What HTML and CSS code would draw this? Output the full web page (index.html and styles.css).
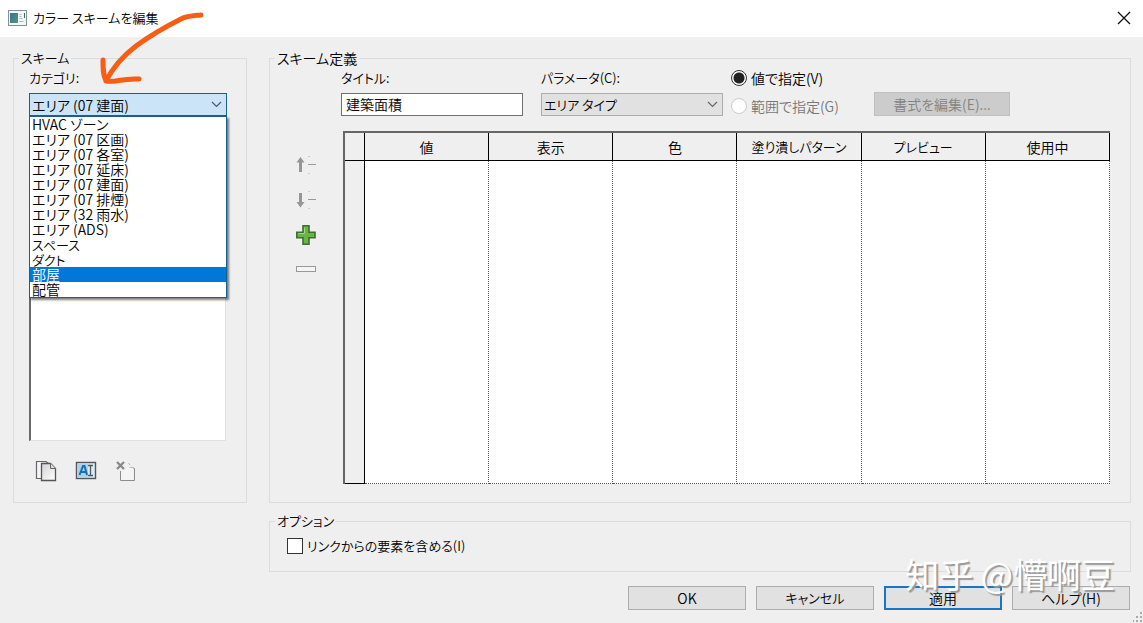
FILE: index.html
```html
<!DOCTYPE html>
<html lang="ja">
<head>
<meta charset="utf-8">
<meta name="viewport" content="width=device-width, initial-scale=1">
<title>カラー スキームを編集</title>
<link rel="stylesheet" href="styles.css">
</head>
<body>
<header class="titlebar">
  <svg class="app-icon" width="19" height="16" viewBox="0 0 19 16" aria-hidden="true">
    <defs><linearGradient id="app" x1="0" y1="0" x2="1" y2="1"><stop offset="0" stop-color="#3c6f9c"/><stop offset="1" stop-color="#4f9a74"/></linearGradient></defs>
    <rect x=".5" y=".5" width="18" height="15" fill="#f4f8f7" stroke="#7f9393"/>
    <rect x="2" y="3" width="8" height="10" fill="url(#app)"/>
    <path d="M11.500 4.500h2M11.500 6.500h2M11.500 8.500h3M11.500 11.500h4" stroke="#a9bcbc"/>
    <path d="M16.500 3v5" stroke="#356b62"/>
  </svg>
  <h1 class="titlebar-text">カラー スキームを編集</h1>
  <button class="close" type="button" aria-label="閉じる">
    <svg width="14" height="14" viewBox="0 0 14 14"><path d="M1 1l12 12M13 1L1 13" stroke="#111" stroke-width="1.300"/></svg>
  </button>
</header>

<main class="content">
  <fieldset class="group scheme">
    <legend class="kana">スキーム</legend>
    <div class="scheme-body">
      <label class="label kana" for="category">カテゴリ:</label>
      <div class="combo combo-open">
        <select id="category"><option>エリア (07 建面)</option></select>
        <svg class="chevron" width="11" height="7" viewBox="0 0 11 7" aria-hidden="true"><path d="M1 1l4.500 4.500L10 1" fill="none" stroke="#4a5b68" stroke-width="1.200"/></svg>
        <ul class="menu" role="listbox" aria-label="カテゴリ">
          <li role="option">HVAC ゾーン</li>
          <li role="option">エリア (07 区画)</li>
          <li role="option">エリア (07 各室)</li>
          <li role="option">エリア (07 延床)</li>
          <li role="option">エリア (07 建面)</li>
          <li role="option">エリア (07 排煙)</li>
          <li role="option">エリア (32 雨水)</li>
          <li role="option">エリア (ADS)</li>
          <li role="option" class="kana">スペース</li>
          <li role="option" class="kana">ダクト</li>
          <li role="option" class="active" aria-selected="true">部屋</li>
          <li role="option">配管</li>
        </ul>
      </div>
      <div class="scheme-list"></div>
      <div class="scheme-tools">
        <button class="tool" type="button" aria-label="複製">
          <svg width="22" height="22" viewBox="0 0 22 22">
            <defs><linearGradient id="page" x1="0" y1="0" x2="1" y2="1"><stop offset="0" stop-color="#d2d2d5"/><stop offset="1" stop-color="#fff"/></linearGradient></defs>
            <path d="M6 18.500H1.500v-17H11l2.500 2" fill="#f5f5f5" stroke="#666" stroke-width="1.200"/>
            <path d="M6.500 3.500h9l5 5v12h-14z" fill="url(#page)" stroke="#555" stroke-width="1.300"/>
            <path d="M15.500 3.500v5h5" fill="#ddd" stroke="#666"/>
          </svg>
        </button>
        <button class="tool" type="button" aria-label="名前変更">
          <svg width="22" height="22" viewBox="0 0 22 22">
            <rect x="1.500" y="2.500" width="19" height="16" fill="#dcebf5" stroke="#555" stroke-width="1.400"/>
            <rect x="3" y="4" width="10" height="13" fill="#a9d2ef"/>
            <path d="M4.500 15L8 6h1.500L12 15M6 12h5" fill="none" stroke="#1672af" stroke-width="2"/>
            <path d="M13 5.500h5M13 15.500h5M15.500 5.500v10" stroke="#4d5961" stroke-width="1.300"/>
          </svg>
        </button>
        <button class="tool" type="button" aria-label="削除" disabled>
          <svg width="22" height="22" viewBox="0 0 22 22">
            <path d="M5 11h4l3-3v-3h1v3h5v12H5z" fill="#f4f4f4"/>
            <path d="M2 2l7 7M9 2L2 9" stroke="#888" stroke-width="2.200"/>
            <path d="M5.500 11v9.500h14V8.500M19.500 8.500l-2-1" fill="none" stroke="#8c8c8c"/>
            <path d="M13.500 3l1.500 2M17.500 7.500h-3" fill="none" stroke="#bbb"/>
          </svg>
        </button>
      </div>
    </div>
  </fieldset>

  <div class="right">
    <fieldset class="group definition">
      <legend>スキーム定義</legend>
      <div class="definition-body">
        <div class="controls">
          <div class="field">
            <label class="label kana" for="title">タイトル:</label>
            <input class="text" id="title" type="text" value="建築面積">
          </div>
          <div class="field">
            <label class="label kana" for="param">パラメータ(C):</label>
            <div class="combo">
              <select class="kana" id="param"><option>エリア タイプ</option></select>
              <svg class="chevron" width="11" height="7" viewBox="0 0 11 7" aria-hidden="true"><path d="M1 1l4.500 4.500L10 1" fill="none" stroke="#666" stroke-width="1.200"/></svg>
            </div>
          </div>
          <div class="radios">
            <label class="check"><input type="radio" name="by" checked>値で指定(V)</label>
            <label class="check off"><input type="radio" name="by" disabled>範囲で指定(G)</label>
          </div>
          <button class="button format" type="button" disabled>書式を編集(E)...</button>
        </div>
        <div class="values">
          <div class="row-tools">
            <button class="tool" type="button" aria-label="上へ" disabled>
              <svg width="22" height="22" viewBox="0 0 22 22"><path d="M5.500 18V7" stroke="#969696" stroke-width="3"/><path d="M1.500 8.500l4-5.500 4 5.500z" fill="#969696"/><path d="M13 10.500h8" stroke="#999"/><path d="M13 2.500h2M13 19.500h2" stroke="#ccc"/></svg>
            </button>
            <button class="tool" type="button" aria-label="下へ" disabled>
              <svg width="22" height="22" viewBox="0 0 22 22"><path d="M5.500 4v10" stroke="#969696" stroke-width="3"/><path d="M1.500 13l4 5.500 4-5.500z" fill="#969696"/><path d="M13 10.500h8" stroke="#999"/><path d="M13 2.500h2M13 19.500h2" stroke="#ccc"/></svg>
            </button>
            <button class="tool" type="button" aria-label="追加">
              <svg width="22" height="22" viewBox="0 0 22 22"><path d="M8 1.800h6v6.400h6v5.600h-6v6.400H8v-6.400H1.800V8.200H8z" fill="#69b545" stroke="#3f6e35" stroke-width="1.600"/><path d="M9.500 3.500v6h-6" fill="none" stroke="#a2d982"/></svg>
            </button>
            <button class="tool" type="button" aria-label="削除" disabled>
              <svg width="22" height="22" viewBox="0 0 22 22"><rect x="1.500" y="7.500" width="19" height="5" fill="#f4f4f4" stroke="#999"/></svg>
            </button>
          </div>
          <div class="table-area">
            <table class="table">
              <thead><tr><th class="handle"></th><th>値</th><th>表示</th><th>色</th><th class="kana">塗り潰しパターン</th><th class="kana">プレビュー</th><th>使用中</th></tr></thead>
              <tbody><tr><td class="handle"></td><td></td><td></td><td></td><td></td><td></td><td></td></tr></tbody>
            </table>
          </div>
        </div>
      </div>
    </fieldset>
    <fieldset class="group options">
      <legend class="kana">オプション</legend>
      <label class="check kana"><input type="checkbox">リンクからの要素を含める(I)</label>
    </fieldset>
  </div>
</main>

<footer class="actions">
  <button class="button" type="button">OK</button>
  <button class="button kana" type="button">キャンセル</button>
  <button class="button default" type="button">適用</button>
  <button class="button" type="button">ヘルプ(H)</button>
</footer>

<svg class="grip" width="10" height="10" viewBox="0 0 10 10" aria-hidden="true"><path d="M7 0h2v2H7zM7 4h2v2H7zM3 4h2v2H3zM7 8h2v2H7zM3 8h2v2H3zM0 8h1v2H0z" fill="#aaa"/></svg>
<svg class="arrow" width="120" height="90" viewBox="0 0 120 90" aria-hidden="true"><path d="M111 5C101 6 97 6 91 9C75 17 61 25 46 36C33 46 23 57 16 71M13 50C13 59 13 65 16 71C25 73 31 68 49 69" fill="none" stroke="#f75d13" stroke-width="5" stroke-linecap="round" stroke-linejoin="round"/></svg>
<div class="watermark" lang="zh-CN">知乎 @懵啊豆</div>
</body>
</html>
```

FILE: styles.css
```css
* { box-sizing: border-box; }

body {
  margin: 0;
  min-height: 100vh;
  display: flex;
  flex-direction: column;
  position: relative;
  background: #efefef;
  color: #000;
  font: 350 14px/18px "Noto Sans CJK JP", sans-serif;
  font-feature-settings: "palt";
}

button, input, select {
  font: inherit;
  font-feature-settings: inherit;
  color: inherit;
}

.titlebar {
  height: 37px;
  display: flex;
  align-items: center;
  gap: 6px;
  padding: 0 12px 1px 8px;
  background: #fff;
}

.titlebar-text {
  flex: 1;
  margin: 0;
  font-size: 13px;
  font-weight: 350;
}

.close, .tool {
  display: flex;
  padding: 0;
  border: 0;
  background: none;
}

.content {
  flex: 1;
  display: grid;
  grid-template-columns: 234px 1fr;
  gap: 22px;
  padding: 12px 12px 0 13px;
}

.group {
  min-width: 0;
  margin: 0;
  padding: 0;
  border: 1px solid #dcdcdc;
}

.group legend {
  margin-left: 5px;
  padding: 0 2px;
}

.scheme { margin-bottom: 69px; }

.scheme-body {
  height: 100%;
  display: flex;
  flex-direction: column;
  padding: 2px 19px 20px 15px;
}

.label {
  display: block;
  height: 18px;
  margin-bottom: 6px;
}

.combo { position: relative; }

.combo select {
  display: block;
  width: 100%;
  height: 23px;
  padding: 0 2px;
  appearance: none;
  border: 1px solid #adadad;
  border-radius: 0;
  background: #e1e1e1;
}

.combo .chevron {
  position: absolute;
  right: 5px;
  top: 8px;
  pointer-events: none;
}

.combo-open select {
  border-color: #17618f;
  background: #cce4f7;
}

.menu {
  position: absolute;
  z-index: 1;
  top: 100%;
  left: 0;
  right: 0;
  margin: 0;
  padding: 0;
  list-style: none;
  line-height: 15px;
  border: 1px solid #17618f;
  background: #fff;
  box-shadow: 2px 2px 2px rgba(0, 0, 0, 0.5);
}

.menu li { padding: 0 2px; }

.menu .active {
  background: #0078d7;
  color: #fff;
}

.scheme-list {
  flex: 1;
  margin-right: 1px;
  border: 1px solid #e0e0e0;
  border-left: 2px solid #696969;
  background: #fff;
}

.scheme-tools {
  display: flex;
  gap: 18px;
  padding: 19px 0 0 6px;
}

.right {
  min-width: 0;
  display: flex;
  flex-direction: column;
  gap: 9px;
}

.definition {
  flex: 1;
}

.definition-body {
  height: 100%;
  display: flex;
  flex-direction: column;
  padding: 2px 20px 18px 0;
}

.controls {
  display: flex;
  gap: 18px;
  padding-left: 71px;
}

.field { width: 182px; }

.text {
  display: block;
  width: 100%;
  height: 23px;
  padding: 0 4px 2px;
  border: 1px solid #707070;
  background: #fff;
}

.radios {
  width: 125px;
  margin-left: -10px;
  display: flex;
  flex-direction: column;
  gap: 10px;
}

.check {
  display: flex;
  align-items: center;
  gap: 4px;
  height: 18px;
  white-space: nowrap;
}

.check input {
  flex: none;
  width: 16px;
  height: 16px;
  margin: 0;
  appearance: none;
  border: 1px solid #333;
  background: #fff;
}

.check input[type="radio"] { border-radius: 50%; }

.check input[type="radio"]:checked {
  background: radial-gradient(circle, #222 5px, #fff 6px);
}

.check input:disabled { border-color: #ccc; }

.off { color: #777; }

.button {
  width: 118px;
  height: 24px;
  padding: 0 0 1px;
  border: 1px solid #adadad;
  background: #e1e1e1;
}

.button.format {
  width: 136px;
  align-self: flex-end;
}

.button:disabled {
  border-color: #c0c0c0;
  background: #ccc;
  color: #838383;
}

.button.default { border: 2px solid #1976c5; }

.values {
  flex: 1;
  display: grid;
  grid-template-columns: 48px 1fr;
  padding: 15px 0 0 25px;
}

.row-tools {
  display: flex;
  flex-direction: column;
  gap: 13px;
  padding-top: 23px;
}

.table-area { display: grid; }

.table {
  width: 100%;
  height: 100%;
  table-layout: fixed;
  border-collapse: separate;
  border-spacing: 0;
  border-top: 2px solid #666;
  border-left: 2px solid #666;
  background: #fff;
}

.table th {
  height: 28px;
  padding: 0;
  border-right: 1px solid #000;
  border-bottom: 1px solid #000;
  background: #efefef;
  font-weight: 350;
}

.table td {
  border-right: 1px dotted #555;
  border-bottom: 1px dotted #555;
}

.table .handle {
  width: 20px;
  border-right: 1px solid #000;
  border-bottom: 1px solid #000;
  background: #efefef;
}

.options { padding: 7px 17px 16px; }
.options legend { margin-left: -12px; }

.kana,
.combo select.kana { font-size: 13px; }

.actions {
  display: flex;
  justify-content: flex-end;
  gap: 10px;
  padding: 14px 13px 13px;
}

.grip {
  position: absolute;
  right: 0;
  bottom: 1px;
}

.arrow {
  position: absolute;
  z-index: 2;
  left: 90px;
  top: 10px;
  pointer-events: none;
}

.watermark {
  position: absolute;
  right: 28px;
  bottom: 27px;
  font: 400 34px/44px "Noto Sans CJK SC", sans-serif;
  font-feature-settings: normal;
  color: #fff;
  text-shadow: 2px 2px 1px #999;
  pointer-events: none;
}
```
